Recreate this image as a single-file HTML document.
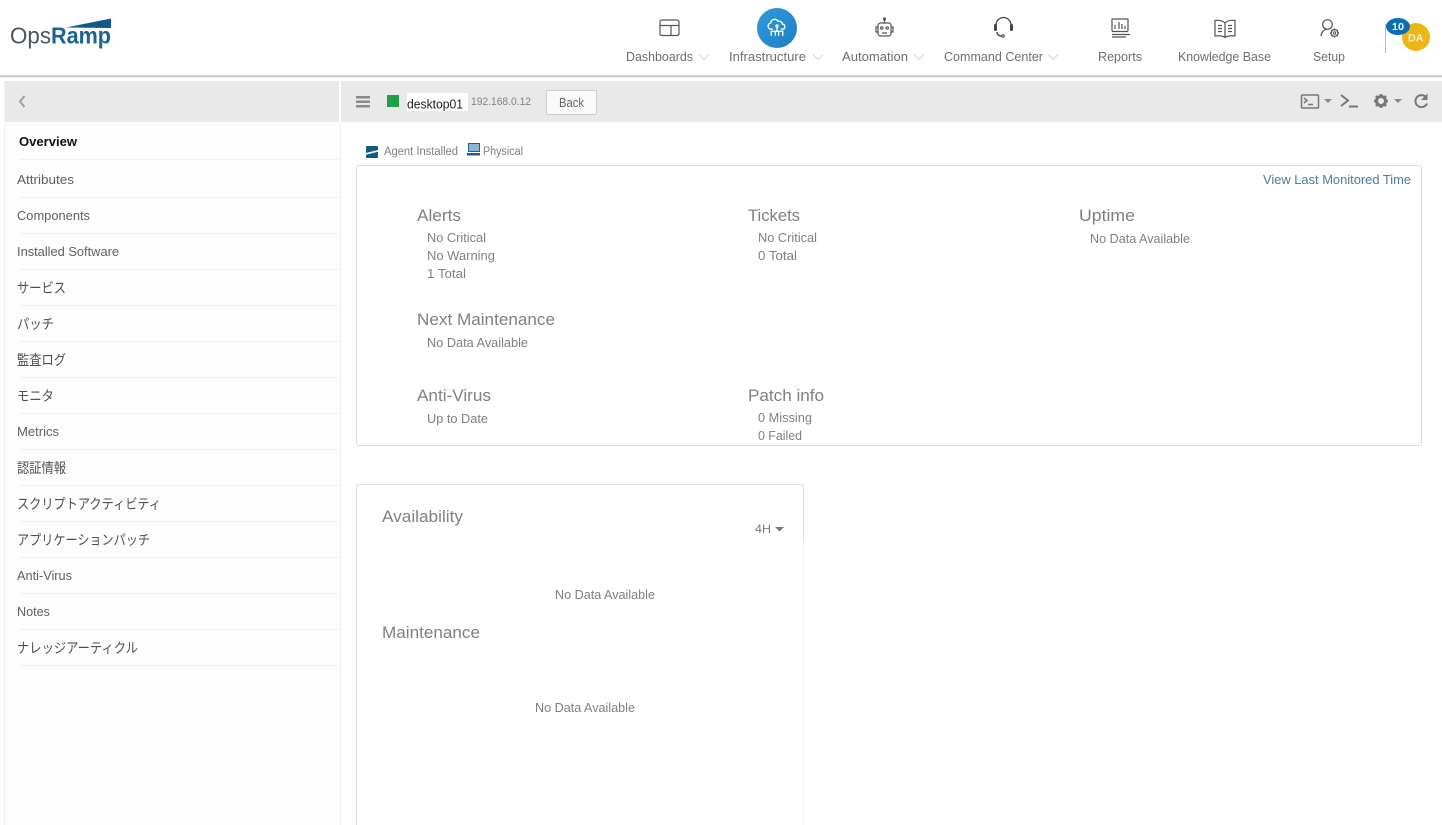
<!DOCTYPE html>
<html lang="en"><head><meta charset="utf-8"><title>OpsRamp</title>
<style>
html,body{margin:0;padding:0;background:#fff;width:1442px;height:825px;overflow:hidden}
svg{display:block}
text{font-family:"Liberation Sans","Noto Sans CJK JP",sans-serif;fill:#666;font-size:13px}
.n{font-size:13px;fill:#6e6e6e}
.s{font-size:12.5px;fill:#606060}
.j{font-size:14px;fill:#505050}
.h{font-size:17px;fill:#808080}
.v{font-size:12.5px;fill:#808080}
.ic{fill:none;stroke:#555;stroke-width:1.2}
</style></head><body>
<svg xmlns="http://www.w3.org/2000/svg" width="1442" height="825" viewBox="0 0 1442 825">
<defs><linearGradient id="g" x1="0" y1="0" x2="1" y2="1"><stop offset="0" stop-color="#2f9ade"/><stop offset="1" stop-color="#1f7fc0"/></linearGradient></defs>
<rect width="1442" height="825" fill="#fff"/>
<!-- header shadow -->
<rect x="0" y="75" width="1442" height="1" fill="#dcdcdc"/><rect x="0" y="76" width="1442" height="1" fill="#c8c8c8"/><rect x="0" y="77" width="1442" height="1" fill="#eeeeee"/>
<!-- logo -->
<text x="10" y="43.500" textLength="41" lengthAdjust="spacingAndGlyphs" style="font-size:23px;fill:#4a545d">Ops</text>
<text x="51" y="43.500" textLength="60" lengthAdjust="spacingAndGlyphs" style="font-size:23px;fill:#1b6390;font-weight:bold">Ramp</text>
<path d="M66 27.500 L111 18.500 V28 Z" fill="#0f5a86"/>
<!-- nav labels -->
<text class="n" x="626" y="61" textLength="67" lengthAdjust="spacingAndGlyphs">Dashboards</text>
<text class="n" x="729" y="61" textLength="77" lengthAdjust="spacingAndGlyphs">Infrastructure</text>
<text class="n" x="842" y="61" textLength="66" lengthAdjust="spacingAndGlyphs">Automation</text>
<text class="n" x="944" y="61" textLength="99" lengthAdjust="spacingAndGlyphs">Command Center</text>
<text class="n" x="1098" y="61" textLength="44" lengthAdjust="spacingAndGlyphs">Reports</text>
<text class="n" x="1178" y="61" textLength="93" lengthAdjust="spacingAndGlyphs">Knowledge Base</text>
<text class="n" x="1313" y="61" textLength="32" lengthAdjust="spacingAndGlyphs">Setup</text>
<g fill="none" stroke="#d2d5d8" stroke-width="1">
<path d="M699 54.500l5 5 5-5M813 54.500l5 5 5-5M914 54.500l5 5 5-5M1048 54.500l5 5 5-5"/>
</g>
<!-- dashboards icon -->
<g class="ic"><rect x="660" y="20" width="19" height="15.500" rx="2"/><path d="M660 25.500h19M671 25.500v10"/></g>
<!-- infrastructure -->
<circle cx="777" cy="28" r="20" fill="url(#g)"/>
<g fill="none" stroke="#fff" stroke-width="1.700" transform="translate(777 28) scale(.82) translate(-777 -27.500)">
<path d="M772 29h-2.500a3.800 3.800 0 0 1-.3-7.500a5 5 0 0 1 9.300-2a4 4 0 0 1 5.200 3.200a3.200 3.200 0 0 1 .3 6.300h-2.500"/>
<circle cx="777" cy="25" r="1.200"/>
<path d="M777 26.500v5M770 37v-5.500h14V37M775 37v-5.500M779 37v-5.500"/>
</g>
<!-- automation -->
<g class="ic"><rect x="878" y="23" width="13" height="13" rx="2.500"/><path d="M884.500 23v-3M878 27h-2v5h2M891 27h2v5h-2M882 33h5"/><circle cx="884.500" cy="19" r="1" fill="#555"/><circle cx="881.800" cy="28" r="1.200"/><circle cx="887.200" cy="28" r="1.200"/></g>
<!-- command center -->
<g fill="none" stroke="#444" stroke-width="1.300"><path d="M996 27v-2a7.500 7.500 0 0 1 15 0v2M997 32c0 3 2 4 5 4"/></g>
<rect x="994" y="24" width="3" height="7" rx="1.200" fill="#444"/><rect x="1010" y="24" width="3" height="7" rx="1.200" fill="#444"/><circle cx="1003" cy="36" r="1.200" fill="none" stroke="#444"/>
<!-- reports -->
<g class="ic"><path d="M1112 31v-12h16v12M1115 29v-4M1119 29v-7M1122 29v-5M1125 29v-3"/><path d="M1112 31.500h16M1112 34.500h18M1112 37h14"/></g>
<!-- knowledge base -->
<g class="ic"><path d="M1225 23c-2-2-6-3-10-2.500V36c4-.5 8 0 10 1.500c2-1.500 6-2 10-1.500V20.500c-4-.5-8 .5-10 2.500zM1225 23v14.500"/><path d="M1218 25.500h4M1218 28.500h4M1218 31.500h4M1228 25.500h4M1228 28.500h4M1228 31.500h4"/></g>
<!-- setup -->
<g class="ic"><circle cx="1327.500" cy="24.500" r="4.800"/><path d="M1321 36c.5-4 3-6.500 6-6.800"/></g>
<circle cx="1334.500" cy="33" r="3.400" fill="none" stroke="#555" stroke-width="1.300"/><circle cx="1334.500" cy="33" r="1.200" fill="none" stroke="#555"/>
<path d="M1334.500 28.500v1.500M1334.500 36v1.500M1330 33h1.500M1337.500 33h1.500M1331.300 29.800l1 1M1336.700 35.200l1 1M1337.700 29.800l-1 1M1331.300 36.200l1-1" stroke="#555" stroke-width="1.200"/>
<!-- avatar -->
<rect x="1385" y="24" width="1" height="29" fill="#a9bfd0"/>
<circle cx="1416" cy="37" r="14" fill="#edb616"/>
<text x="1408" y="41.500" textLength="15.500" lengthAdjust="spacingAndGlyphs" style="font-size:11px;font-weight:bold;fill:#f9eccc">DA</text>
<ellipse cx="1398" cy="26.500" rx="12" ry="8.500" fill="#0b6fb5"/>
<text x="1392" y="30" textLength="12" lengthAdjust="spacingAndGlyphs" style="font-size:10.500px;font-weight:bold;font-family:'Liberation Sans',sans-serif;fill:#fff">10</text>
<!-- bars -->
<rect x="5" y="81" width="334" height="41" fill="#e9e9e9"/>
<rect x="341" y="81" width="1101" height="41" fill="#e9e9e9"/>
<rect x="5" y="122" width="335" height="703" fill="#fdfdfd"/>
<rect x="4" y="81" width="1" height="744" fill="#f0f0f0"/>
<rect x="340" y="122" width="1" height="703" fill="#f0f0f0"/>
<path d="M24.500 96l-4.500 5.500 4.500 5.500" fill="none" stroke="#a0a0a0" stroke-width="2"/>
<!-- sidebar -->
<text x="19" y="146" textLength="58" lengthAdjust="spacingAndGlyphs" style="font-size:13px;font-weight:bold;fill:#111">Overview</text>
<g fill="#f0f0f0">
<rect x="20" y="159" width="319" height="1"/><rect x="20" y="197" width="319" height="1"/><rect x="20" y="233" width="319" height="1"/><rect x="20" y="269" width="319" height="1"/><rect x="20" y="305" width="319" height="1"/><rect x="20" y="341" width="319" height="1"/><rect x="20" y="377" width="319" height="1"/><rect x="20" y="413" width="319" height="1"/><rect x="20" y="449" width="319" height="1"/><rect x="20" y="485" width="319" height="1"/><rect x="20" y="521" width="319" height="1"/><rect x="20" y="557" width="319" height="1"/><rect x="20" y="593" width="319" height="1"/><rect x="20" y="629" width="319" height="1"/><rect x="20" y="665" width="319" height="1"/>
</g>
<text class="s" x="17" y="184" textLength="57" lengthAdjust="spacingAndGlyphs">Attributes</text>
<text class="s" x="17" y="220" textLength="73" lengthAdjust="spacingAndGlyphs">Components</text>
<text class="s" x="17" y="256" textLength="102" lengthAdjust="spacingAndGlyphs">Installed Software</text>
<text class="j" x="17" y="293" textLength="49" lengthAdjust="spacingAndGlyphs">サービス</text>
<text class="j" x="17" y="329" textLength="37" lengthAdjust="spacingAndGlyphs">パッチ</text>
<text class="j" x="17" y="365" textLength="49" lengthAdjust="spacingAndGlyphs">監査ログ</text>
<text class="j" x="17" y="401" textLength="37" lengthAdjust="spacingAndGlyphs">モニタ</text>
<text class="s" x="17" y="436" textLength="42" lengthAdjust="spacingAndGlyphs">Metrics</text>
<text class="j" x="17" y="473" textLength="49" lengthAdjust="spacingAndGlyphs">認証情報</text>
<text class="j" x="17" y="509" textLength="144" lengthAdjust="spacingAndGlyphs">スクリプトアクティビティ</text>
<text class="j" x="17" y="545" textLength="133" lengthAdjust="spacingAndGlyphs">アプリケーションパッチ</text>
<text class="s" x="17" y="580" textLength="55" lengthAdjust="spacingAndGlyphs">Anti-Virus</text>
<text class="s" x="17" y="616" textLength="33" lengthAdjust="spacingAndGlyphs">Notes</text>
<text class="j" x="17" y="653" textLength="121" lengthAdjust="spacingAndGlyphs">ナレッジアーティクル</text>
<!-- toolbar -->
<g fill="#8a8a8a"><rect x="356" y="96" width="14" height="2.500"/><rect x="356" y="100.500" width="14" height="2.500"/><rect x="356" y="105" width="14" height="2.500"/></g>
<rect x="387" y="95" width="12" height="12" fill="#1fa14a"/>
<rect x="407" y="93" width="61" height="18" fill="#fff"/>
<text x="407" y="108.500" textLength="56" lengthAdjust="spacingAndGlyphs" style="font-size:12.500px;fill:#222">desktop01</text>
<text x="471" y="105" textLength="60" lengthAdjust="spacingAndGlyphs" style="font-size:11px;fill:#808080">192.168.0.12</text>
<rect x="546.500" y="90.500" width="50" height="24" rx="1.500" fill="#fafafa" stroke="#ccc"/>
<text x="559" y="107" textLength="25" lengthAdjust="spacingAndGlyphs" style="font-size:12.500px;fill:#666">Back</text>
<!-- right tools -->
<g fill="none" stroke="#777" stroke-width="1.500"><rect x="1301.500" y="95" width="17" height="13" rx="1"/><path d="M1304 98l3 2.500-3 2.500M1308 104.500h5"/><path d="M1341 95l7 5.500-7 5.500" stroke-width="2"/><path d="M1349 106.500h9" stroke-width="2"/></g>
<path d="M1324 99h8l-4 4z" fill="#888"/><path d="M1394 99h8l-4 4z" fill="#888"/>
<circle cx="1381" cy="101" r="4.500" fill="none" stroke="#777" stroke-width="3"/>
<g stroke="#777" stroke-width="2.500"><path d="M1381 94v3M1381 105v3M1374 101h3M1385 101h3M1376 96l2 2M1384 104l2 2M1386 96l-2 2M1376 106l2-2"/></g>
<path d="M1425.800 97a6 6 0 1 0 1.200 6.500" fill="none" stroke="#777" stroke-width="2"/><path d="M1427.500 93.500v6.500h-6.500z" fill="#777"/>
<!-- chips -->
<rect x="366" y="146" width="12" height="12" rx="1" fill="#0f5a86"/><path d="M366 153l12-3v1.800l-12 3z" fill="#fff"/>
<text x="384" y="155" textLength="74" lengthAdjust="spacingAndGlyphs" style="font-size:11.500px;fill:#808080">Agent Installed</text>
<rect x="468.500" y="143.500" width="11" height="8" fill="#8fb4d4" stroke="#1d5f8f"/><rect x="467" y="153" width="13" height="2.500" fill="#1d5f8f"/>
<text x="483" y="155" textLength="40" lengthAdjust="spacingAndGlyphs" style="font-size:11.500px;fill:#808080">Physical</text>
<!-- summary card -->
<rect x="356.500" y="165.500" width="1065" height="280" rx="2" fill="#fff" stroke="#ddd"/>
<text x="1263" y="184" textLength="148" lengthAdjust="spacingAndGlyphs" style="font-size:12.500px;fill:#4a7c9c">View Last Monitored Time</text>
<text class="h" x="417" y="221" textLength="44" lengthAdjust="spacingAndGlyphs">Alerts</text>
<text class="v" x="427" y="242" textLength="59" lengthAdjust="spacingAndGlyphs">No Critical</text>
<text class="v" x="427" y="260" textLength="68" lengthAdjust="spacingAndGlyphs">No Warning</text>
<text class="v" x="427" y="278" textLength="39" lengthAdjust="spacingAndGlyphs">1 Total</text>
<text class="h" x="748" y="221" textLength="52" lengthAdjust="spacingAndGlyphs">Tickets</text>
<text class="v" x="758" y="242" textLength="59" lengthAdjust="spacingAndGlyphs">No Critical</text>
<text class="v" x="758" y="260" textLength="39" lengthAdjust="spacingAndGlyphs">0 Total</text>
<text class="h" x="1079" y="221" textLength="56" lengthAdjust="spacingAndGlyphs">Uptime</text>
<text class="v" x="1090" y="243" textLength="100" lengthAdjust="spacingAndGlyphs">No Data Available</text>
<text class="h" x="417" y="325" textLength="138" lengthAdjust="spacingAndGlyphs">Next Maintenance</text>
<text class="v" x="427" y="347" textLength="101" lengthAdjust="spacingAndGlyphs">No Data Available</text>
<text class="h" x="417" y="401" textLength="74" lengthAdjust="spacingAndGlyphs">Anti-Virus</text>
<text class="v" x="427" y="423" textLength="61" lengthAdjust="spacingAndGlyphs">Up to Date</text>
<text class="h" x="748" y="401" textLength="76" lengthAdjust="spacingAndGlyphs">Patch info</text>
<text class="v" x="758" y="422" textLength="54" lengthAdjust="spacingAndGlyphs">0 Missing</text>
<text class="v" x="758" y="440" textLength="44" lengthAdjust="spacingAndGlyphs">0 Failed</text>
<!-- availability card -->
<path d="M356.500 825V487a2.500 2.500 0 0 1 2.500-2.500h442a2.500 2.500 0 0 1 2.500 2.500v52" fill="#fff" stroke="#ddd"/>
<path d="M803.500 539V825" stroke="#f4f4f4"/>
<text class="h" x="382" y="522" textLength="81" lengthAdjust="spacingAndGlyphs">Availability</text>
<text x="755" y="533" textLength="16" lengthAdjust="spacingAndGlyphs" style="font-size:12px;fill:#777">4H</text>
<path d="M775 527h9l-4.500 4.500z" fill="#777"/>
<text class="v" x="555" y="599" textLength="100" lengthAdjust="spacingAndGlyphs">No Data Available</text>
<text class="h" x="382" y="638" textLength="98" lengthAdjust="spacingAndGlyphs">Maintenance</text>
<text class="v" x="535" y="712" textLength="100" lengthAdjust="spacingAndGlyphs">No Data Available</text>
</svg>
</body></html>
